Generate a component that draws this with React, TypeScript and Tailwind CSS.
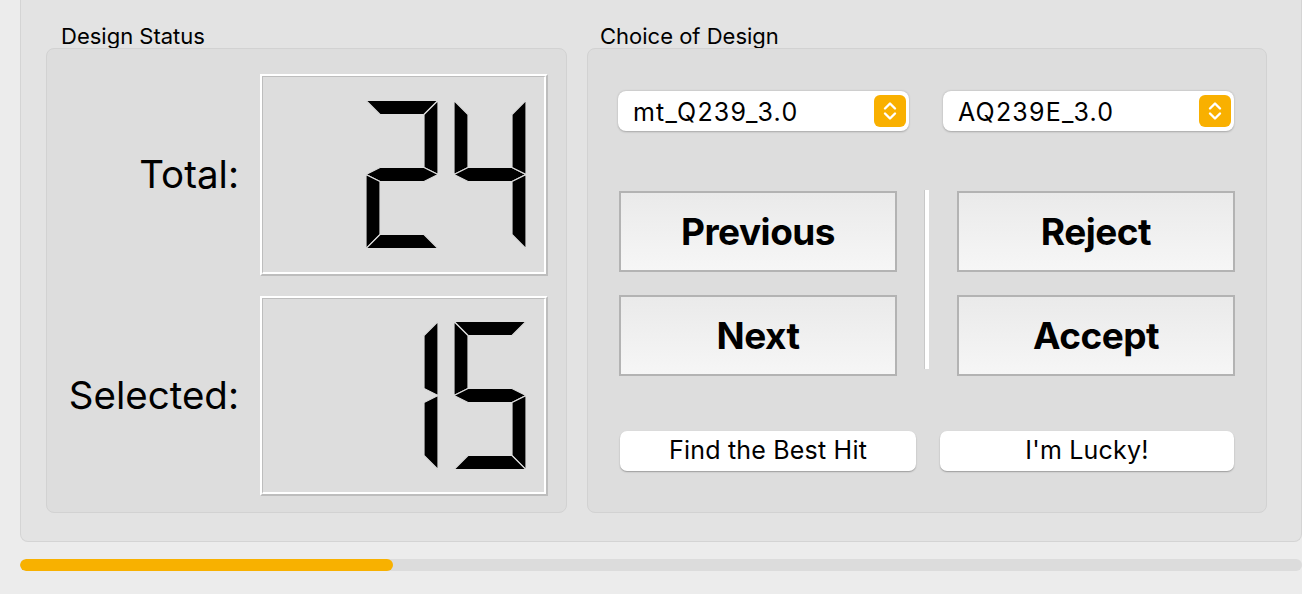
import React from 'react'

// seven-segment shapes in a 72x148 cell, bar thickness 14
const SEGMENTS: Record<string, string> = {
  a: '0,0 72,0 58,14 14,14',
  b: '72,0 72,74 58,67 58,14',
  c: '72,74 72,148 58,134 58,81',
  d: '14,134 58,134 72,148 0,148',
  e: '0,74 14,81 14,134 0,148',
  f: '0,0 14,14 14,67 0,74',
  g: '0,74 14,67 58,67 72,74 58,81 14,81',
}

const DIGITS: Record<string, string> = {
  '0': 'abcdef',
  '1': 'bc',
  '2': 'abged',
  '3': 'abgcd',
  '4': 'fgbc',
  '5': 'afgcd',
  '6': 'afgedc',
  '7': 'abc',
  '8': 'abcdefg',
  '9': 'abcdfg',
}

const LcdNumber = ({ value }: { value: string }) => {
  const chars = value.split('')
  const w = chars.length * 88 - 16
  return (
    <div className="h-full border-2 border-t-white border-l-white border-b-[#bdbdbd] border-r-[#bdbdbd]">
      <div className="flex items-center justify-end w-[284px] h-full pr-[18px] bg-[#dddddd] border-t border-l border-t-[#bdbdbd] border-l-[#bdbdbd] border-b-2 border-r-2 border-b-white border-r-white">
        <svg width={w} height={149} viewBox={`0 0 ${w} 149`}>
          {chars.map((ch, i) => (
            <g key={i} transform={`translate(${i * 88},0.5)`}>
              {DIGITS[ch].split('').map((s) => (
                <polygon key={s} points={SEGMENTS[s]} fill="#000" stroke="#dddddd" strokeWidth={1.2} />
              ))}
            </g>
          ))}
        </svg>
      </div>
    </div>
  )
}

const StatusRow = ({ label, value, height }: { label: string; value: string; height: string }) => (
  <div className={`flex items-center justify-end pr-[18px] ${height}`}>
    <span className="text-[38.5px] text-black mr-[21px]">{label}</span>
    <div className="h-full">
      <LcdNumber value={value} />
    </div>
  </div>
)

const Stepper = () => (
  <div className="ml-auto w-[32px] h-[32px] rounded-[6px] bg-[#f9b000] flex items-center justify-center">
    <svg width="32" height="32" viewBox="0 0 32 32" fill="none" stroke="white" strokeWidth="2.4" strokeLinecap="round" strokeLinejoin="round">
      <path d="M11 13.5 16 8.5l5 5" />
      <path d="M11 18.5l5 5 5-5" />
    </svg>
  </div>
)

const Select = ({ value, width }: { value: string; width: string }) => (
  <div className={`flex items-center h-[40px] ${width} rounded-[8px] bg-white pl-[15px] pr-[3px] shadow-[0_0.5px_2px_rgba(0,0,0,0.25)]`}>
    <span className="pt-[3px] text-[25px] tracking-[1.2px] text-black">{value}</span>
    <Stepper />
  </div>
)

const BigButton = ({ children }: { children: React.ReactNode }) => (
  <button className="w-[278px] h-[81px] border-2 border-[#b3b3b3] bg-linear-to-b from-[#eaeaea] to-[#f6f6f6] text-[37px] font-bold tracking-[-0.5px] text-black">
    {children}
  </button>
)

const SmallButton = ({ children, width }: { children: React.ReactNode; width: string }) => (
  <button className={`${width} h-[40px] rounded-[7px] bg-white text-[25px] tracking-[0.2px] text-black shadow-[0_1px_1.5px_rgba(0,0,0,0.3)]`}>
    {children}
  </button>
)

export default function App() {
  return (
    <div className="w-[1302px] h-[594px] bg-[#ececec] overflow-hidden font-[Inter,sans-serif]">
      <div className="ml-[20px] w-[1282px] h-[542px] bg-[#e3e3e3] border border-t-0 border-[#d4d4d4] rounded-b-[8px] pt-[24px] pl-[25px] flex gap-[20px]">
        {/* Design Status */}
        <div className="w-[521px] flex flex-col">
          <div className="h-[24px] leading-[24px] pl-[15px] text-[22px] text-black">Design Status</div>
          <div className="h-[465px] bg-[#dddddd] border border-[#d2d2d2] rounded-[8px] pt-[25px] flex flex-col gap-[20px]">
            <StatusRow label="Total:" value="24" height="h-[202px]" />
            <StatusRow label="Selected:" value="15" height="h-[200px]" />
          </div>
        </div>

        {/* Choice of Design */}
        <div className="w-[680px] flex flex-col">
          <div className="h-[24px] leading-[24px] pl-[13px] text-[22px] text-black">Choice of Design</div>
          <div className="h-[465px] bg-[#dddddd] border border-[#d2d2d2] rounded-[8px] flex flex-col">
            <div className="flex gap-[34px] mt-[42px] pl-[30px]">
              <Select value="mt_Q239_3.0" width="w-[291px]" />
              <Select value="AQ239E_3.0" width="w-[291px]" />
            </div>
            <div className="flex mt-[60px] pl-[31px]">
              <div className="flex flex-col gap-[23px]">
                <BigButton>Previous</BigButton>
                <BigButton>Next</BigButton>
              </div>
              <div className="ml-[27px] mr-[28px] mt-[-1px] w-[5px] h-[179px] bg-white border-l border-[#c8c8c8]" />
              <div className="flex flex-col gap-[23px]">
                <BigButton>Reject</BigButton>
                <BigButton>Accept</BigButton>
              </div>
            </div>
            <div className="flex gap-[24px] mt-[55px] pl-[32px]">
              <SmallButton width="w-[296px]">Find the Best Hit</SmallButton>
              <SmallButton width="w-[294px]">I'm Lucky!</SmallButton>
            </div>
          </div>
        </div>
      </div>

      <div className="mt-[17px] ml-[20px] w-[1282px] h-[12px] rounded-full bg-[#dcdcdc] overflow-hidden">
        <div className="w-[373px] h-full rounded-full bg-[#f8b100]" />
      </div>
    </div>
  )
}
